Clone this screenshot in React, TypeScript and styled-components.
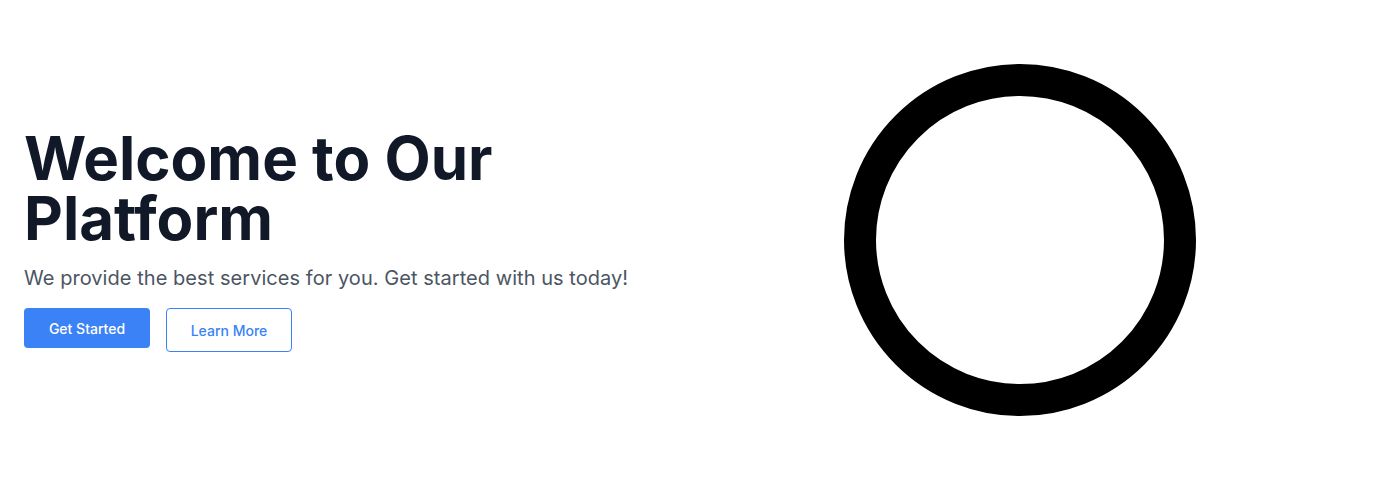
import React from "react";
import styled, { createGlobalStyle } from "styled-components";

const Global = createGlobalStyle`
  html, body { margin: 0; padding: 0; background: #ffffff; }
  body { font-family: Inter, "Noto Sans", sans-serif; }
`;

const Hero = styled.section`
  display: grid;
  grid-template-columns: 1fr 1fr;
  align-items: center;
  height: 480px;
  padding: 0 24px;
  box-sizing: border-box;
`;

const Copy = styled.div`
  display: flex;
  flex-direction: column;
  align-items: flex-start;
`;

const Title = styled.h1`
  margin: 0 0 16px;
  font-size: 60px;
  line-height: 60px;
  font-weight: 700;
  color: #111827;
  letter-spacing: 0;
`;

const Lead = styled.p`
  margin: 0 0 16px;
  font-size: 20px;
  line-height: 28px;
  color: #4b5563;
  letter-spacing: 0.05px;
`;

const Actions = styled.div`
  display: flex;
  gap: 16px;
  align-items: flex-start;
`;

const Button = styled.button<{ $variant: "solid" | "outline" }>`
  box-sizing: border-box;
  width: 126px;
  height: ${(p) => (p.$variant === "solid" ? "40px" : "44px")};
  padding: 0;
  border-radius: 4px;
  font-family: Inter, "Noto Sans", sans-serif;
  font-size: 14px;
  font-weight: 500;
  cursor: pointer;
  background: ${(p) => (p.$variant === "solid" ? "#3b82f6" : "#ffffff")};
  color: ${(p) => (p.$variant === "solid" ? "#ffffff" : "#3b82f6")};
  border: ${(p) => (p.$variant === "solid" ? "none" : "1px solid #3b82f6")};
`;

const Visual = styled.div`
  display: flex;
  justify-content: center;
  align-items: center;
`;

export default function App() {
  return (
    <>
      <Global />
      <Hero>
        <Copy>
          <Title>
            Welcome to Our
            <br />
            Platform
          </Title>
          <Lead>We provide the best services for you. Get started with us today!</Lead>
          <Actions>
            <Button $variant="solid">Get Started</Button>
            <Button $variant="outline">Learn More</Button>
          </Actions>
        </Copy>
        <Visual>
          <svg width="352" height="352" viewBox="0 0 352 352">
            <circle cx="176" cy="176" r="160" fill="none" stroke="#000" strokeWidth="32" />
          </svg>
        </Visual>
      </Hero>
    </>
  );
}
